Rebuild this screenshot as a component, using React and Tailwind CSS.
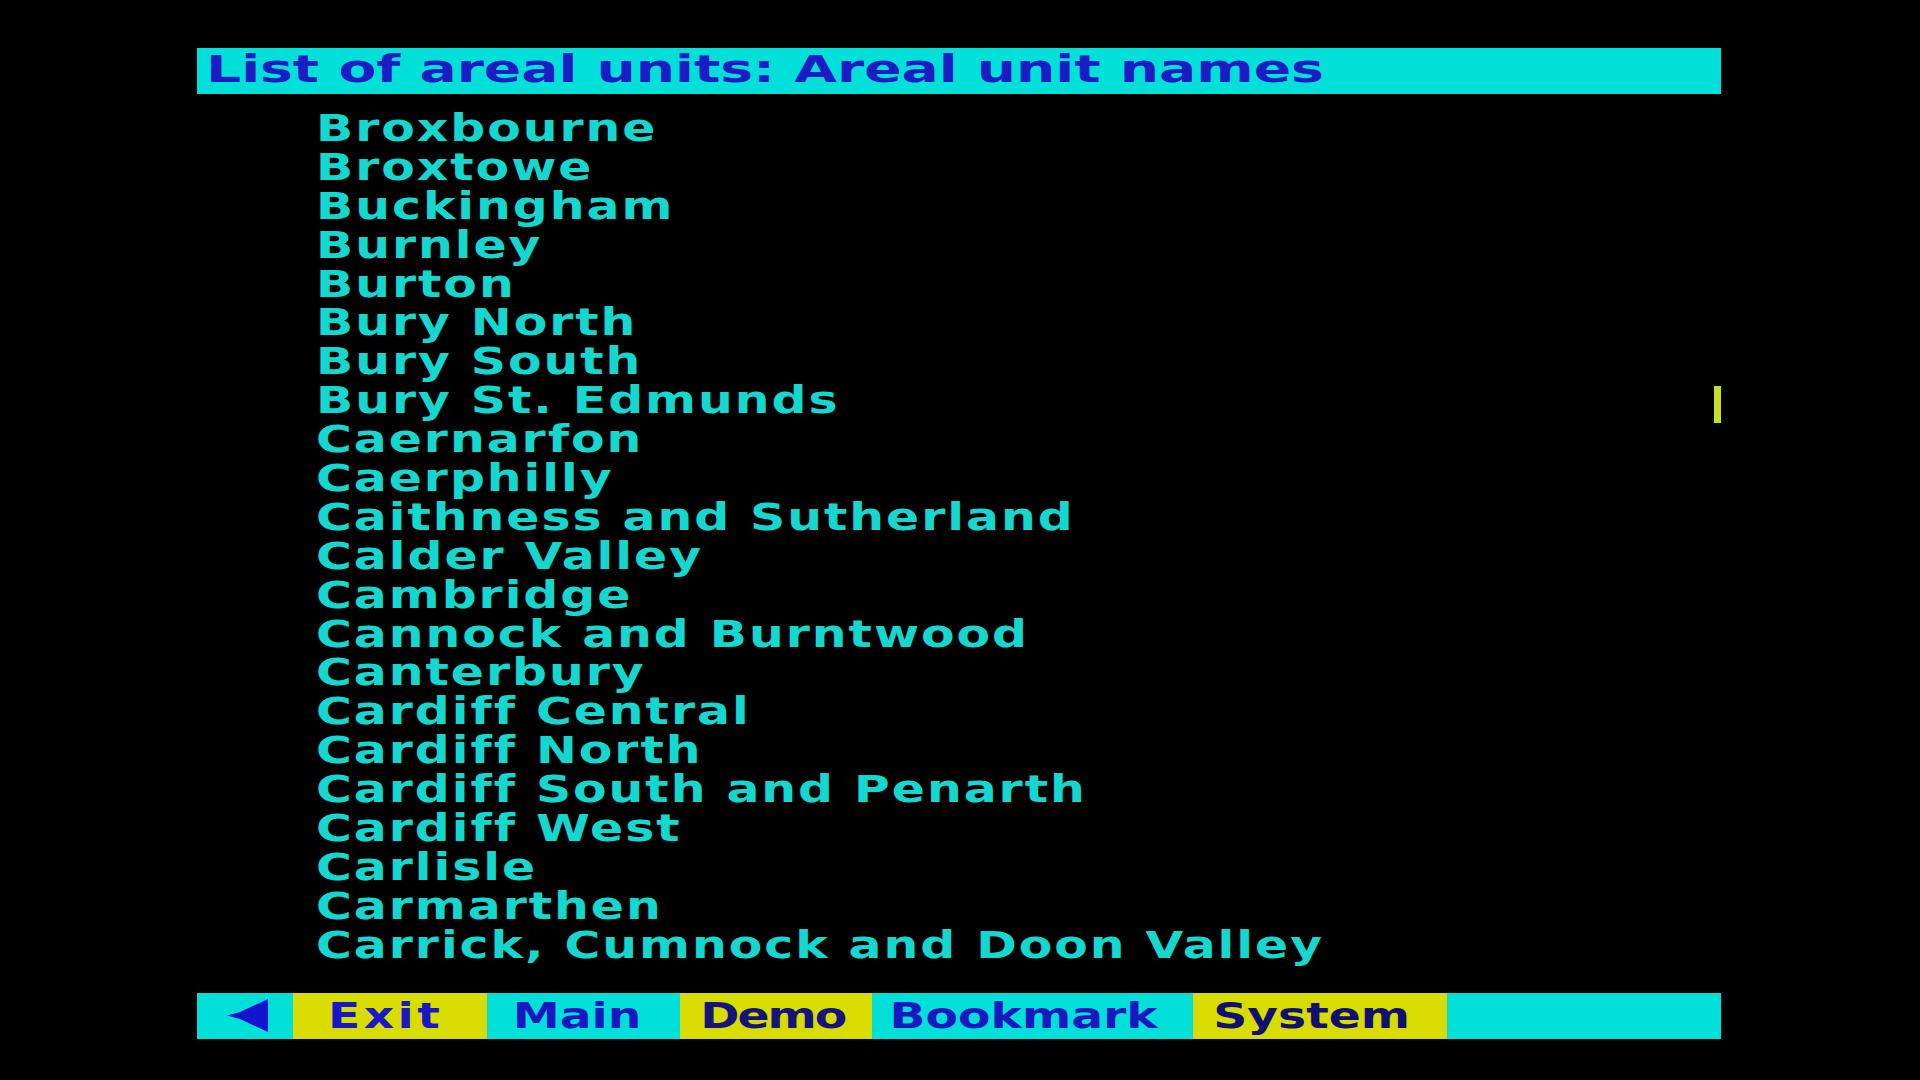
import React from "react";

const units = [
  "Broxbourne",
  "Broxtowe",
  "Buckingham",
  "Burnley",
  "Burton",
  "Bury North",
  "Bury South",
  "Bury St. Edmunds",
  "Caernarfon",
  "Caerphilly",
  "Caithness and Sutherland",
  "Calder Valley",
  "Cambridge",
  "Cannock and Burntwood",
  "Canterbury",
  "Cardiff Central",
  "Cardiff North",
  "Cardiff South and Penarth",
  "Cardiff West",
  "Carlisle",
  "Carmarthen",
  "Carrick, Cumnock and Doon Valley",
];

const BackArrow = () => (
  <svg width="42" height="34" viewBox="0 0 42 34" className="block">
    <polygon points="0,16.5 13,13 41,0 41,33 13,20" fill="#1414d0" />
  </svg>
);

const Cell = ({ w, bg, color, pl, tracking, children }) => (
  <div className={`${w} ${bg} h-full flex items-start`}>
    <span
      className={`${pl} ${color} ${tracking} inline-block origin-left scale-x-[1.35] text-[35px] leading-[46px] font-bold whitespace-pre`}
    >
      {children}
    </span>
  </div>
);

export default function App() {
  return (
    <div className="w-[1920px] h-[1080px] bg-black overflow-hidden font-['DejaVu_Sans',sans-serif]">
      <div className="ml-[197px] w-[1524px] pt-[48px]">
        {/* title bar */}
        <div className="h-[46px] bg-[#00e0d8] pl-[9px]">
          <span className="inline-block origin-left scale-x-[1.49] text-[37px] leading-[44px] font-bold text-[#1c1cc4] whitespace-pre">
            List of areal units: Areal unit names
          </span>
        </div>

        {/* list */}
        <div className="mt-[16px] pl-[119px]">
          {units.map((name, i) => (
            <div key={name} className="h-[38.9px] flex items-start justify-between">
              <span className="inline-block origin-left scale-x-[1.32] tracking-[1.5px] text-[37px] leading-[38.9px] font-bold text-[#14d8d0] whitespace-pre">
                {name}
              </span>
              {i === 7 && <div className="mt-[4px] w-[7px] h-[37px] bg-[#c8e020]" />}
            </div>
          ))}
        </div>

        {/* function keys */}
        <div className="mt-[27px] h-[46px] flex">
          <div className="w-[96px] h-full bg-[#00e0d8] flex items-center pl-[30px]">
            <BackArrow />
          </div>
          <Cell w="w-[194px]" bg="bg-[#d8dc00]" color="text-[#1818c8]" pl="pl-[26px]" tracking="tracking-[2.5px]">
            Exit
          </Cell>
          <Cell w="w-[193px]" bg="bg-[#00e0d8]" color="text-[#1818c0]" pl="pl-[19px]" tracking="">
            Main
          </Cell>
          <Cell w="w-[192px]" bg="bg-[#d8dc00]" color="text-[#14147c]" pl="pl-[15px]" tracking="tracking-[-1.5px]">
            Demo
          </Cell>
          <Cell w="w-[321px]" bg="bg-[#00e0d8]" color="text-[#1818c0]" pl="pl-[13px]" tracking="">
            Bookmark
          </Cell>
          <Cell w="w-[254px]" bg="bg-[#d8dc00]" color="text-[#101070]" pl="pl-[15px]" tracking="">
            System
          </Cell>
          <div className="flex-1 h-full bg-[#00e0d8]" />
        </div>
      </div>
    </div>
  );
}
